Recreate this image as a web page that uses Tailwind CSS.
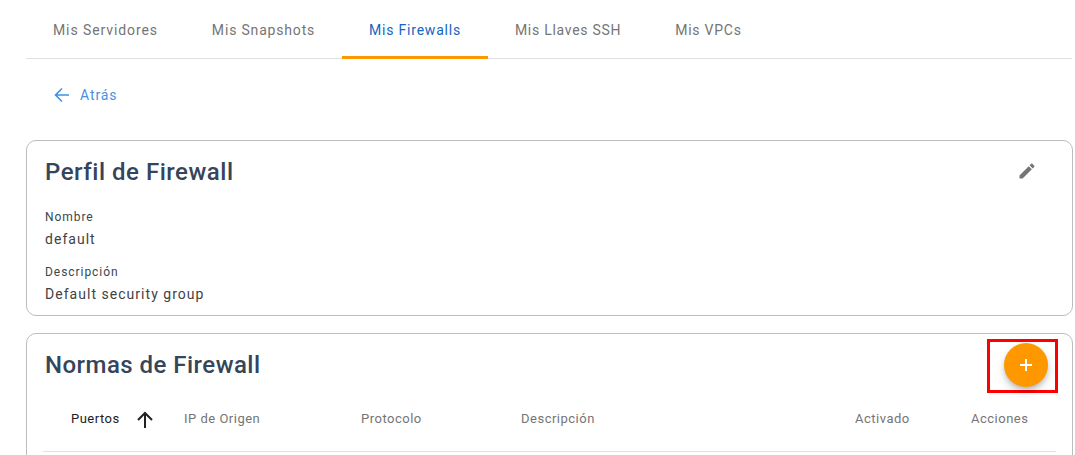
<!DOCTYPE html>
<html>
<head>
<meta charset="utf-8">
<script src="https://cdn.jsdelivr.net/npm/@tailwindcss/browser@4"></script>
</head>
<body class="bg-white">
<div class="h-[455px] overflow-hidden font-['Roboto',sans-serif] pl-[26px] pr-[2px]">
  <nav class="flex h-[59px] pt-px border-b border-[#e0e0e0] mr-px text-[14px] font-normal text-[#757575]">
    <a class="flex items-center h-[58px] px-[27px] tracking-[0.9px]">Mis Servidores</a>
    <a class="flex items-center h-[58px] px-[27px] tracking-[0.82px]">Mis Snapshots</a>
    <a class="flex items-center h-[58px] px-[27px] tracking-[0.78px] text-[#1565c0] border-b-[3px] pt-[3px] border-[#ff9800]">Mis Firewalls</a>
    <a class="flex items-center h-[58px] px-[27px] tracking-[0.72px]">Mis Llaves SSH</a>
    <a class="flex items-center h-[58px] px-[27px] tracking-[0.75px]">Mis VPCs</a>
  </nav>
  <div class="flex items-center gap-[9px] h-[36px] mt-[18px] pl-[27px] text-[14px] tracking-[0.9px] text-[#4a90e2]">
    <svg width="18" height="18" viewBox="0 0 18 18" fill="none" stroke="#3f8fe8" stroke-width="1.6"><path d="M16 9H2.5M9 2.5 2.5 9 9 15.5"/></svg>
    <span>Atrás</span>
  </div>
  <section class="mt-[27px] h-[176px] rounded-[10px] border border-[#bdbdbd] px-[18px] relative">
    <h2 class="pt-[15px] text-[24px] leading-[32px] font-medium tracking-[0.52px] text-[#35455a]">Perfil de Firewall</h2>
    <svg class="absolute right-[35px] top-[20px]" width="20" height="20" viewBox="0 0 24 24" fill="#757575"><path d="M3 17.25V21h3.75L17.81 9.94l-3.75-3.75L3 17.25zM20.71 7.04a1 1 0 0 0 0-1.41l-2.34-2.34a1 1 0 0 0-1.41 0l-1.83 1.83 3.75 3.75 1.83-1.83z"/></svg>
    <div class="mt-[21px] text-[12px] leading-[16px] tracking-[0.95px] text-[#37474f]">Nombre</div>
    <div class="mt-[4px] text-[14px] leading-[20px] tracking-[1.03px] text-[#424242]">default</div>
    <div class="mt-[15px] text-[12px] leading-[16px] tracking-[0.95px] text-[#37474f]">Descripción</div>
    <div class="mt-[4px] text-[14px] leading-[20px] tracking-[1.03px] text-[#424242]">Default security group</div>
  </section>
  <section class="mt-[17px] h-[200px] rounded-[10px] border border-[#bdbdbd] px-[16px] relative">
    <div class="flex items-center justify-between h-[62px] pl-[2px]">
      <h2 class="text-[24px] leading-[32px] font-medium tracking-[0.47px] text-[#35455a]">Normas de Firewall</h2>
      <div class="mr-[-2px] mt-[2px] w-[71px] h-[54px] border-[3px] border-[#ff0000] flex items-start pl-[14px] pt-px">
        <button class="size-[44px] shrink-0 rounded-full bg-[#ff9800] shadow-[0_3px_5px_-1px_rgba(0,0,0,0.2),0_5px_10px_rgba(0,0,0,0.14)] flex items-center justify-center">
          <svg width="14" height="14" viewBox="0 0 14 14" stroke="#fff" stroke-width="2"><path d="M7 1v12M1 7h12"/></svg>
        </button>
      </div>
    </div>
    <div class="flex items-center h-[56px] border-b border-[#e0e0e0] text-[13px] pb-[10px] font-normal tracking-[0.5px] text-[#757575]">
      <div class="w-[141px] pl-[28px] flex items-center gap-[16px] text-[#212121]">
        <span>Puertos</span>
        <svg class="mt-[2px]" width="18" height="18" viewBox="0 0 18 18" fill="none" stroke="#212121" stroke-width="2"><path d="M9 17V2M2 9l7-7 7 7"/></svg>
      </div>
      <div class="w-[177px]">IP de Origen</div>
      <div class="w-[160px]">Protocolo</div>
      <div class="w-[334px]">Descripción</div>
      <div class="w-[116px]">Activado</div>
      <div>Acciones</div>
    </div>
  </section>
</div>
</body>
</html>
